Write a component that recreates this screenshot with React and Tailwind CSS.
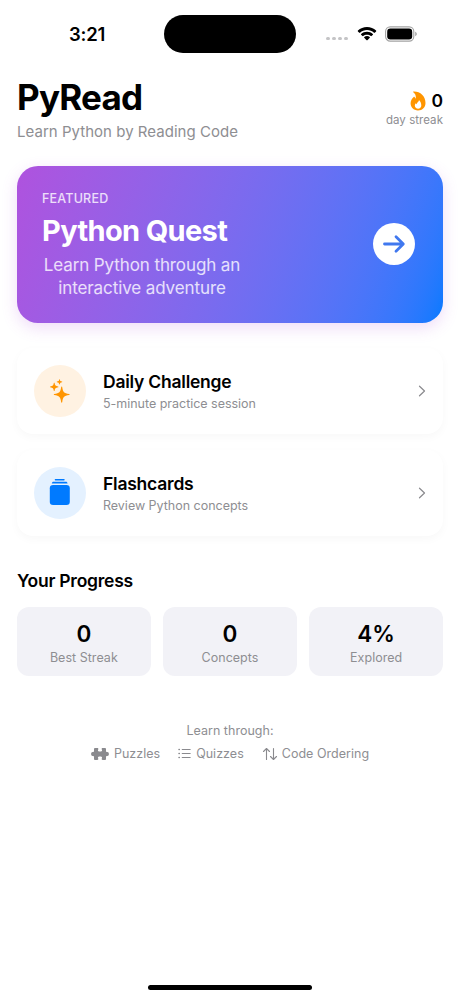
import React from 'react'

const BatteryIcon = () => (
  <svg width="33" height="16" viewBox="0 0 33 16" fill="none">
    <rect x="0.6" y="0.9" width="28.2" height="14.2" rx="4.6" stroke="#a3a3a3" strokeWidth="1.1" />
    <rect x="2.2" y="2.5" width="25" height="11" rx="3.2" fill="black" />
    <path d="M30.2 5.800v4.400c1-.4 1.600-1.200 1.600-2.200s-.6-1.800-1.600-2.200z" fill="#a3a3a3" />
  </svg>
)

const WifiIcon = () => (
  <svg width="20" height="15" viewBox="0 0 20 15" fill="black">
    <path d="M10 3.100c2.700 0 5.100 1 7 2.700.2.200.5.200.7 0l1.400-1.400c.2-.2.2-.6 0-.8C16.700 1.400 13.500.1 10 .1S3.300 1.400.9 3.600c-.2.200-.2.600 0 .8l1.400 1.400c.2.200.5.200.7 0 1.900-1.700 4.300-2.700 7-2.700z" />
    <path d="M10 7.700c1.500 0 2.800.5 3.800 1.400.2.200.5.200.7 0l1.400-1.400c.2-.2.200-.600 0-.8C14.300 5.500 12.300 4.700 10 4.700s-4.300.8-5.900 2.200c-.2.200-.2.600 0 .8l1.400 1.400c.2.200.5.200.7 0 1-.9 2.300-1.400 3.800-1.400z" />
    <path d="M12.800 10.800c.2-.2.200-.6-.1-.8-.7-.5-1.600-.9-2.700-.9s-2 .4-2.700.9c-.3.200-.3.600-.1.800l2.400 2.400c.2.200.6.200.8 0z" />
  </svg>
)

const FlameIcon = () => (
  <svg width="16" height="20" viewBox="0 0 16 20">
    <path
      fillRule="evenodd"
      fill="#ff9500"
      d="M3.500.6C9.800.2 15.500 5 15.500 11.900c0 4.300-3 7.500-7.500 7.500S.6 16.400.6 12.300c0-2.700 1.300-4.800 3.100-6.300.4-.3 1-.1 1.200.4.200.6.500 1 .9 1.200C6.100 4.600 5.300 2.700 3.300 1.300c-.3-.2-.2-.7.2-.7zM8.900 9.100c.3 2-2.100 2-1.900 4.100-.7-.2-.9-.7-.9-1.300-.9.800-1.300 1.700-1.300 2.700 0 2 1.500 3.200 3.300 3.200s3.200-1.200 3.200-3.200c0-2.200-1-4.400-2.400-5.500z"
    />
  </svg>
)

const SparklesIcon = () => (
  <svg width="22" height="26" viewBox="0 0 22 26" fill="#ff9500" className="-ml-px mt-0.5">
    <path d="M12.700 7.500c.3 0 .5.200.5.500.8 5.300 1.700 6.200 7 7.100.6.100.6.900 0 1-5.300.9-6.200 1.800-7 7.100-.1.600-.9.600-1 0-.8-5.300-1.700-6.200-7-7.100-.6-.1-.6-.9 0-1 5.300-.9 6.200-1.800 7-7.100 0-.3.200-.5.500-.5z" />
    <path d="M5.200 3.700c.2 0 .3.100.4.400.4 2.400.9 2.900 3.500 3.400.5.100.5.700 0 .8-2.600.5-3.100 1-3.500 3.400-.1.400-.7.400-.8 0-.4-2.400-.9-2.900-3.500-3.400-.5-.1-.5-.7 0-.8 2.600-.5 3.100-1 3.500-3.400.1-.3.200-.4.400-.4z" />
    <path d="M10.500.2c.2 0 .3.100.3.300.3 1.500.6 1.800 2.200 2.100.4.100.4.500 0 .6-1.600.3-1.900.6-2.200 2.100-.1.300-.5.300-.6 0-.3-1.500-.6-1.800-2.200-2.100-.4-.1-.4-.5 0-.6 1.600-.3 1.900-.6 2.200-2.100 0-.2.100-.3.300-.3z" />
  </svg>
)

const StackIcon = () => (
  <svg width="22" height="28" viewBox="0 0 22 28" fill="#007aff" className="-mt-px">
    <rect x="5.700" y="1" width="10" height="1.500" rx="0.700" />
    <path d="M4.500 3.800h12.400c.9 0 1.500.6 1.700 1.600H2.800C3 4.400 3.600 3.800 4.500 3.800z" />
    <rect x="0.800" y="7" width="20" height="20" rx="3.300" />
  </svg>
)

const PuzzleIcon = () => (
  <svg width="18" height="14" viewBox="0 0 18 14" fill="#8a8a8e">
    <path d="M4.200 1h2.100c.8 0 1.200.5 1 1.200-.2.500-.4.800-.4 1.200 0 .7.800 1.200 2.100 1.200s2.100-.5 2.100-1.200c0-.4-.2-.7-.4-1.200-.2-.7.200-1.200 1-1.200h2.100c.8 0 1.200.4 1.200 1.200v2c0 .5.300.8.800.8h.6c.900 0 1.500.8 1.500 2s-.6 2-1.500 2h-.6c-.5 0-.8.300-.8.800v2c0 .8-.4 1.200-1.200 1.200h-2.100c-.8 0-1.200-.5-1-1.200.2-.5.400-.8.400-1.200 0-.7-.8-1.200-2.100-1.200s-2.100.5-2.100 1.200c0 .4.200.7.400 1.200.2.700-.2 1.200-1 1.200H4.200C3.400 13 3 12.600 3 11.800v-2c0-.5-.3-.8-.8-.8h-.6C.7 9 .1 8.200.1 7s.6-2 1.500-2h.6c.5 0 .8-.3.800-.8v-2C3 1.400 3.400 1 4.200 1z" />
  </svg>
)

const ListIcon = () => (
  <svg width="13" height="11" viewBox="0 0 13 11" fill="none" stroke="#8a8a8e" strokeWidth="1" strokeLinecap="round">
    <path d="M4.200 1.500h8M4.200 5.500h8M4.200 9.500h8" />
    <path d="M1 1.500h.3M1 5.500h.3M1 9.500h.3" strokeWidth="1.500" />
  </svg>
)

const SortIcon = () => (
  <svg width="16" height="14" viewBox="0 0 16 14" fill="none" stroke="#8a8a8e" strokeWidth="1.100" strokeLinecap="round" strokeLinejoin="round">
    <path d="M4.500 12.500V1.500M1.500 4.500l3-3 3 3" />
    <path d="M11.500 1.500v11M8.500 9.500l3 3 3-3" />
  </svg>
)

const ActionRow = ({ icon, iconClass, title, subtitle }) => (
  <button className="flex h-[86px] w-full items-center rounded-2xl bg-white px-[17px] text-left shadow-[0_3px_10px_rgba(0,0,0,0.03)]">
    <div className={`flex size-[52px] shrink-0 items-center justify-center rounded-full ${iconClass}`}>
      {icon}
    </div>
    <div className="ml-[17px] flex-1 pt-[3px]">
      <div className="text-[17.5px] leading-[23px] font-semibold tracking-[-0.23px] text-black">{title}</div>
      <div className="text-[12.5px] leading-[21px] tracking-[-0.02px] text-[#8e8e92]">{subtitle}</div>
    </div>
    <svg width="8" height="12" viewBox="0 0 8 12" fill="none" stroke="#8a8a8e" strokeWidth="1.200" strokeLinecap="round" strokeLinejoin="round">
      <path d="M1.500 1.200 6.500 6l-5 4.800" />
    </svg>
  </button>
)

const stats = [
  { value: '0', label: 'Best Streak' },
  { value: '0', label: 'Concepts' },
  { value: '4%', label: 'Explored' }
]

const App = () => {
  return (
    <div className="flex h-[999px] w-[460px] flex-col overflow-hidden bg-white font-['Inter',sans-serif] text-black">
      <div className="flex h-[68px] items-center">
        <div className="w-[164px] pl-[69px] text-[18.5px] leading-6 font-semibold tracking-[-0.2px]">3:21</div>
        <div className="h-[38px] w-[132px] rounded-full bg-black" />
        <div className="ml-[30px] flex items-center">
          <div className="mt-[9px] flex gap-[2.500px]">
            {[0, 1, 2, 3].map(dot => (
              <div key={dot} className="size-[3.500px] rounded-full bg-[#c4c4c6]" />
            ))}
          </div>
          <div className="ml-[9px]"><WifiIcon /></div>
          <div className="ml-[8px]"><BatteryIcon /></div>
        </div>
      </div>

      <header className="flex h-[98px] items-start justify-between px-[17px] pt-[8px]">
        <div>
          <h1 className="text-[35px] leading-[42px] font-bold tracking-[-0.8px]">PyRead</h1>
          <p className="mt-[3px] text-[15px] leading-[21px] tracking-[0.03px] text-[#8e8e92]">Learn Python by Reading Code</p>
        </div>
        <div className="flex flex-col items-end pt-[13px]">
          <div className="flex items-center gap-[5px]">
            <FlameIcon />
            <span className="text-[17.500px] leading-6 font-semibold">0</span>
          </div>
          <span className="text-[11.500px] leading-[15px] tracking-[0.05px] text-[#8e8e92]">day streak</span>
        </div>
      </header>

      <main className="flex flex-col px-[17px]">
        <button className="flex h-[156.500px] items-center justify-between rounded-[21px] bg-[linear-gradient(110deg_in_oklab,#af52de,#007aff)] pl-[25px] pr-[28.500px] text-white shadow-[0_5px_16px_rgba(175,82,222,0.2)]">
          <div className="flex flex-col items-start pt-[3px]">
            <span className="text-[12.500px] leading-4 font-medium tracking-[0.2px] text-white/80">FEATURED</span>
            <span className="mt-[6px] text-[29px] leading-[35px] font-bold tracking-[-0.65px]">Python Quest</span>
            <span className="mt-[6px] w-[200px] text-center text-[17px] leading-[23px] tracking-[-0.1px] text-white/80">
              Learn Python through an interactive adventure
            </span>
          </div>
          <div className="flex size-[42px] items-center justify-center rounded-full bg-white">
            <svg width="24" height="20" viewBox="0 0 24 20" fill="none" stroke="#4078ef" strokeWidth="2.800" strokeLinecap="round" strokeLinejoin="round">
              <path d="M2.500 10h18M14 2.700l7.300 7.300-7.300 7.300" />
            </svg>
          </div>
        </button>

        <div className="mt-[25px] flex flex-col gap-[16px]">
          <ActionRow
            icon={<SparklesIcon />}
            iconClass="bg-[#fff2e2]"
            title="Daily Challenge"
            subtitle="5-minute practice session"
          />
          <ActionRow
            icon={<StackIcon />}
            iconClass="bg-[#e4f1ff]"
            title="Flashcards"
            subtitle="Review Python concepts"
          />
        </div>

        <h2 className="mt-[33px] text-[17.500px] leading-6 font-semibold tracking-[-0.24px]">Your Progress</h2>
        <div className="mt-[14px] grid grid-cols-3 gap-[12.500px]">
          {stats.map(stat => (
            <div key={stat.label} className="flex h-[69px] flex-col items-center rounded-xl bg-[#f2f2f7] pt-[13px]">
              <span className="text-[22.500px] leading-7 font-semibold">{stat.value}</span>
              <span className="mt-px text-[12.500px] leading-[18px] tracking-[0.03px] text-[#8e8e92]">{stat.label}</span>
            </div>
          ))}
        </div>

        <div className="mt-[46px] flex flex-col items-center text-[12.500px] leading-[18px] tracking-[0.02px] text-[#8e8e92]">
          <p>Learn through:</p>
          <div className="mt-[5px] flex gap-[18px]">
            <span className="flex items-center gap-[5px]"><PuzzleIcon />Puzzles</span>
            <span className="flex items-center gap-[5px]"><ListIcon />Quizzes</span>
            <span className="flex items-center gap-[4px]"><SortIcon />Code Ordering</span>
          </div>
        </div>
      </main>

      <div className="mx-auto mt-auto mb-[9px] h-[5px] w-[164px] shrink-0 rounded-full bg-black" />
    </div>
  )
}

export default App
